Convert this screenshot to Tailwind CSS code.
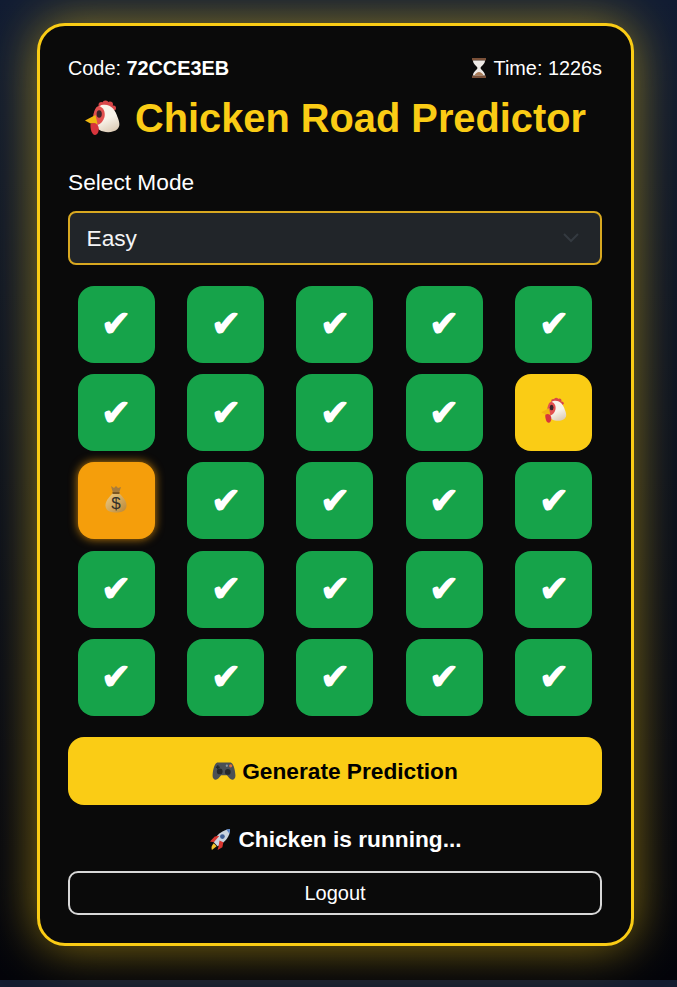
<!DOCTYPE html>
<html lang="en">
<head>
<meta charset="utf-8">
<script src="https://cdn.jsdelivr.net/npm/@tailwindcss/browser@4"></script>
</head>
<body class="m-0 h-[987px] overflow-hidden bg-[#141c30] font-['Liberation_Sans',Arial,sans-serif]">
<svg width="0" height="0" class="absolute" aria-hidden="true">
  <defs>
    <linearGradient id="headShade" x1="0.3" y1="0" x2="0.7" y2="1"><stop offset="0.5" stop-color="#f8f3ea"/><stop offset="1" stop-color="#dccbb5"/></linearGradient>
    <linearGradient id="bagShade" x1="0" y1="0" x2="1" y2="1"><stop offset="0" stop-color="#efcd86"/><stop offset="1" stop-color="#b98637"/></linearGradient>
    <symbol id="chicken" viewBox="0 0 36 36">
      <circle cx="17" cy="5" r="3" fill="#d8474a"/><circle cx="21" cy="3.500" r="3" fill="#d8474a"/><circle cx="25.500" cy="4.500" r="3" fill="#d8474a"/><circle cx="29" cy="8" r="2.500" fill="#d8474a"/>
      <path d="M17 5C26 3 31 10 33 17C35 22 36 26 33 29C29 33 20 33 15 30C11 27 10 20 11 14C12 9 14 6 17 5Z" fill="url(#headShade)"/>
      <path d="M14 6C19 7 21 12 20 17C19 21 16 24 13 25C10 22 8 18 9 14C10 10 11 7 14 6Z" fill="#e2504f"/>
      <ellipse cx="14.700" cy="14" rx="2.600" ry="3.800" fill="#3a2228"/>
      <path d="M11 15L.5 20.500L6 23.500L13 24Z" fill="#f0b810"/>
      <path d="M6 24C9 22 13 23 14 27C15 31 13 35 10.500 35C7.500 35 5.500 29 6 24Z" fill="#d8353c"/>
    </symbol>
  </defs>
</svg>
<div class="h-[980px] bg-gradient-to-b from-[#111c33] to-[#03040a] pl-[36.500px] pt-[22.500px]">
  <main class="flex h-[923px] w-[597px] flex-col rounded-[28px] border-[3px] border-[#facc15] bg-[#0a0a0a] px-[28.500px] pt-[30.500px] text-white shadow-[0_0_50px_rgba(250,204,21,0.55)]">
    <div class="flex h-[24px] items-center justify-between text-[19.850px] leading-[24px]">
      <span>Code: <b>72CCE3EB</b></span>
      <span class="flex items-center gap-[7px]">
        <svg width="16" height="20" viewBox="0 0 16 20" aria-hidden="true"><path d="M1 0h14v2.500H1zM1 17.500h14V20H1z" fill="#7a5038"/><path d="M2 2.500h12c0 4-4 5.500-4.500 7.500.5 2 4.500 3.500 4.500 7.500H2c0-4 4-5.500 4.500-7.500C6 8 2 6.500 2 2.500z" fill="#eeeae6"/><path d="M3.500 17.500c.8-2 3-3.500 4.500-3.500s3.700 1.500 4.500 3.500z" fill="#a97c58"/></svg>
        Time: 1226s</span>
    </div>
    <h1 class="mt-[15px] flex h-[46px] items-center justify-center gap-[14px] text-[39.800px] font-bold leading-[46px] text-[#facc15]">
      <svg width="37" height="36" aria-hidden="true"><use href="#chicken"/></svg>
      <span>Chicken Road Predictor</span>
    </h1>
    <label class="mt-[28px] block h-[26px] text-[22.700px] leading-[26px]">Select Mode</label>
    <div class="mt-[16px] flex h-[54px] items-center justify-between rounded-[8px] border-2 border-[#d8a820] bg-[#212529] pl-[16.500px] pr-[21px] text-[22.700px] leading-[26px] text-[#f4f4f5]">
      <span class="-mt-[1px]">Easy</span>
      <svg width="16" height="10" viewBox="0 0 16 10" fill="none" stroke="#343a40" stroke-width="2" aria-hidden="true"><path d="M1 1l7 7 7-7"/></svg>
    </div>
    <div class="mt-[20.750px] grid grid-cols-[repeat(5,77px)] justify-between gap-y-[11.250px] px-[9.900px]">
      <div class="flex size-[77px] items-center justify-center rounded-[16px] bg-[#16a34a] text-[36px] leading-none font-bold">✔</div>
      <div class="flex size-[77px] items-center justify-center rounded-[16px] bg-[#16a34a] text-[36px] leading-none font-bold">✔</div>
      <div class="flex size-[77px] items-center justify-center rounded-[16px] bg-[#16a34a] text-[36px] leading-none font-bold">✔</div>
      <div class="flex size-[77px] items-center justify-center rounded-[16px] bg-[#16a34a] text-[36px] leading-none font-bold">✔</div>
      <div class="flex size-[77px] items-center justify-center rounded-[16px] bg-[#16a34a] text-[36px] leading-none font-bold">✔</div>
      <div class="flex size-[77px] items-center justify-center rounded-[16px] bg-[#16a34a] text-[36px] leading-none font-bold">✔</div>
      <div class="flex size-[77px] items-center justify-center rounded-[16px] bg-[#16a34a] text-[36px] leading-none font-bold">✔</div>
      <div class="flex size-[77px] items-center justify-center rounded-[16px] bg-[#16a34a] text-[36px] leading-none font-bold">✔</div>
      <div class="flex size-[77px] items-center justify-center rounded-[16px] bg-[#16a34a] text-[36px] leading-none font-bold">✔</div>
      <div class="flex size-[77px] items-center justify-center rounded-[16px] bg-[#facc15] pb-[4px]">
        <svg width="26" height="27" aria-hidden="true"><use href="#chicken"/></svg>
      </div>
      <div class="flex size-[77px] items-center justify-center rounded-[16px] bg-[#f59e0b] pb-[3px] shadow-[0_0_10px_rgba(245,158,11,0.8)]">
        <svg width="22" height="28" viewBox="0 0 22 28" aria-hidden="true"><path d="M6 1l3 2 2-2 2 2 3-1-2 6H8z" fill="#a87c3c"/><path d="M8 8c-3 3-8 8-7.500 13 .5 5 5 6.500 10.500 6.500s10-1.500 10.500-6.500c.5-5-4.500-10-7.500-13z" fill="url(#bagShade)"/><path d="M7.500 8h7" stroke="#7c5620" stroke-width="2"/><text x="11" y="24" text-anchor="middle" font-family="Liberation Sans" font-size="17" fill="#33302a">$</text></svg>
      </div>
      <div class="flex size-[77px] items-center justify-center rounded-[16px] bg-[#16a34a] text-[36px] leading-none font-bold">✔</div>
      <div class="flex size-[77px] items-center justify-center rounded-[16px] bg-[#16a34a] text-[36px] leading-none font-bold">✔</div>
      <div class="flex size-[77px] items-center justify-center rounded-[16px] bg-[#16a34a] text-[36px] leading-none font-bold">✔</div>
      <div class="flex size-[77px] items-center justify-center rounded-[16px] bg-[#16a34a] text-[36px] leading-none font-bold">✔</div>
      <div class="flex size-[77px] items-center justify-center rounded-[16px] bg-[#16a34a] text-[36px] leading-none font-bold">✔</div>
      <div class="flex size-[77px] items-center justify-center rounded-[16px] bg-[#16a34a] text-[36px] leading-none font-bold">✔</div>
      <div class="flex size-[77px] items-center justify-center rounded-[16px] bg-[#16a34a] text-[36px] leading-none font-bold">✔</div>
      <div class="flex size-[77px] items-center justify-center rounded-[16px] bg-[#16a34a] text-[36px] leading-none font-bold">✔</div>
      <div class="flex size-[77px] items-center justify-center rounded-[16px] bg-[#16a34a] text-[36px] leading-none font-bold">✔</div>
      <div class="flex size-[77px] items-center justify-center rounded-[16px] bg-[#16a34a] text-[36px] leading-none font-bold">✔</div>
      <div class="flex size-[77px] items-center justify-center rounded-[16px] bg-[#16a34a] text-[36px] leading-none font-bold">✔</div>
      <div class="flex size-[77px] items-center justify-center rounded-[16px] bg-[#16a34a] text-[36px] leading-none font-bold">✔</div>
      <div class="flex size-[77px] items-center justify-center rounded-[16px] bg-[#16a34a] text-[36px] leading-none font-bold">✔</div>
      <div class="flex size-[77px] items-center justify-center rounded-[16px] bg-[#16a34a] text-[36px] leading-none font-bold">✔</div>
    </div>
    <button class="mt-[21.250px] flex h-[68px] w-full items-center justify-center gap-[6px] rounded-[16px] bg-[#facc15] text-[22.700px] font-bold text-black">
      <svg width="24" height="20" viewBox="0 0 25 21" aria-hidden="true"><path d="M6 1.500h13c3 0 5 6 5.500 13.500.3 4.500-3.500 6-6 3.500l-3-3.500h-6l-3 3.500c-2.500 2.500-6.300 1-6-3.500C1 7.500 3 1.500 6 1.500z" fill="#4b5055"/><circle cx="8" cy="11" r="3" fill="#24282b"/><circle cx="16.500" cy="11.500" r="3" fill="#24282b"/><circle cx="19.500" cy="5" r="1.700" fill="#d9703c"/><circle cx="15.500" cy="5" r="1.200" fill="#8a98a0"/><path d="M4 6.500h4M6 4.500v4" stroke="#24282b" stroke-width="1.500"/></svg>
      Generate Prediction
    </button>
    <p class="mt-[21px] flex h-[26px] items-center justify-center gap-[6px] text-[22.700px] font-bold leading-[26px]">
      <svg width="24" height="22" viewBox="0 0 25 23" aria-hidden="true"><path d="M6 15C8 7 15 2 23 1c0 8-5 14-13 18z" fill="#c9d3de"/><path d="M19 1.500l4-.5-.5 5z" fill="#5a86c9"/><circle cx="15" cy="9" r="2.500" fill="#3f5f95"/><path d="M7 9l5-1-6 7-4-1zM11 19l1-6 4 2-1 5-5 3z" fill="#d8352f"/><path d="M6 16l3 3-5 4c-1-3 0-5 2-7z" fill="#f5c32c"/></svg>
      Chicken is running...
    </p>
    <button class="mt-[19px] h-[44px] w-full rounded-[10px] border-2 border-[#d8d8d8] text-[20px] leading-[24px] text-white">Logout</button>
  </main>
</div>
</body>
</html>
